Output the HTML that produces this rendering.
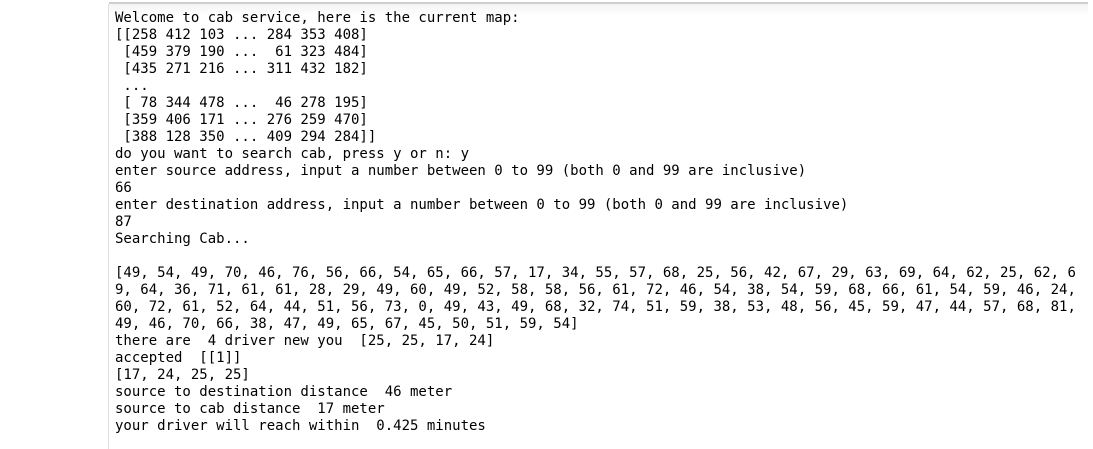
<!DOCTYPE html>
<html><head><meta charset="utf-8"><style>
html,body{margin:0;padding:0;background:#fff;width:1093px;height:449px;overflow:hidden}
.top{position:absolute;left:109px;top:2px;width:979px;height:2px;background:#cfcfcf}
.shade{position:absolute;left:109px;top:4px;width:979px;height:12px;background:linear-gradient(#f3f3f3,#fff)}
.vl{position:absolute;left:108px;top:4px;width:1px;height:445px;background:#e0e0e0}
pre{position:absolute;left:115px;top:10px;margin:0;font-family:"DejaVu Sans Mono","Liberation Mono",monospace;font-size:14px;line-height:17px;color:#000}
</style></head><body>
<div class="top"></div><div class="shade"></div><div class="vl"></div>
<pre>Welcome to cab service, here is the current map:
[[258 412 103 ... 284 353 408]
 [459 379 190 ...  61 323 484]
 [435 271 216 ... 311 432 182]
 ...
 [ 78 344 478 ...  46 278 195]
 [359 406 171 ... 276 259 470]
 [388 128 350 ... 409 294 284]]
do you want to search cab, press y or n: y
enter source address, input a number between 0 to 99 (both 0 and 99 are inclusive)
66
enter destination address, input a number between 0 to 99 (both 0 and 99 are inclusive)
87
Searching Cab...

[49, 54, 49, 70, 46, 76, 56, 66, 54, 65, 66, 57, 17, 34, 55, 57, 68, 25, 56, 42, 67, 29, 63, 69, 64, 62, 25, 62, 6
9, 64, 36, 71, 61, 61, 28, 29, 49, 60, 49, 52, 58, 58, 56, 61, 72, 46, 54, 38, 54, 59, 68, 66, 61, 54, 59, 46, 24,
60, 72, 61, 52, 64, 44, 51, 56, 73, 0, 49, 43, 49, 68, 32, 74, 51, 59, 38, 53, 48, 56, 45, 59, 47, 44, 57, 68, 81,
49, 46, 70, 66, 38, 47, 49, 65, 67, 45, 50, 51, 59, 54]
there are  4 driver new you  [25, 25, 17, 24]
accepted  [[1]]
[17, 24, 25, 25]
source to destination distance  46 meter
source to cab distance  17 meter
your driver will reach within  0.425 minutes</pre>
</body></html>
